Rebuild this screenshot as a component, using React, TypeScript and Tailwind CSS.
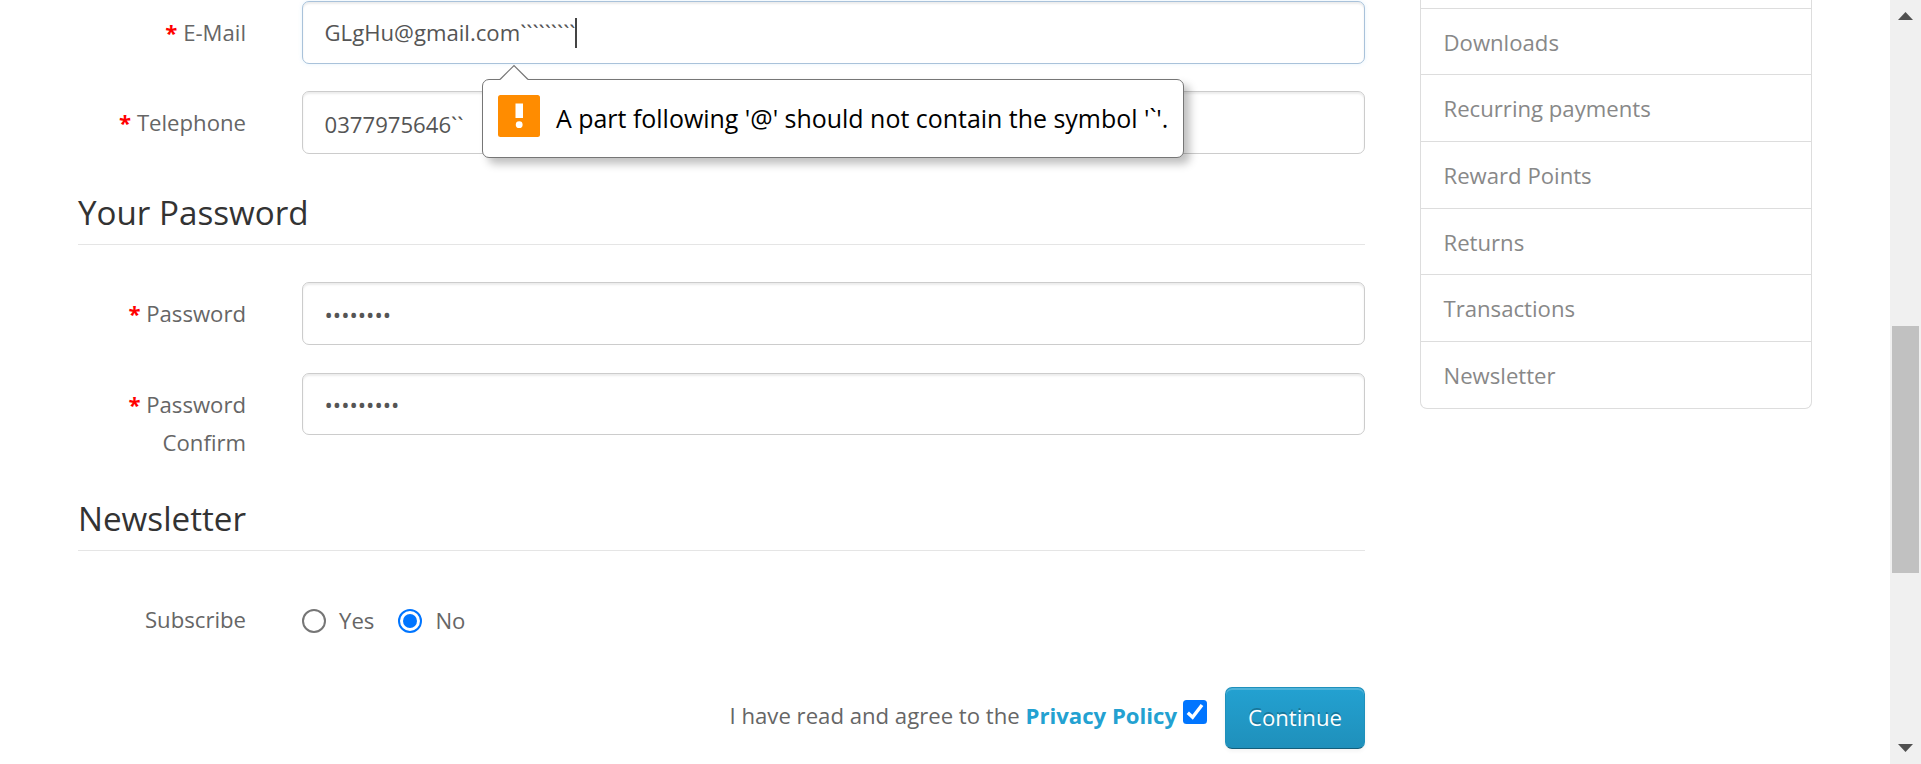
import type { ReactNode } from "react";

const links = ["Downloads", "Recurring payments", "Reward Points", "Returns", "Transactions", "Newsletter"];

const fieldBox =
  "w-[1063px] rounded-[7px] border border-[#ccc] bg-white px-[21.5px] text-[22.15px] text-[#555] shadow-[inset_0_2px_2px_rgba(0,0,0,0.075)] outline-none";

function Label({ children, required = true }: { children: ReactNode; required?: boolean }) {
  return (
    <div className="mr-[56px] w-[168px] shrink-0 pt-[13px] text-right leading-[37.5px] text-[#666]">
      {required && <span className="font-bold text-[#f00]">* </span>}
      {children}
    </div>
  );
}

function Legend({ children }: { children: ReactNode }) {
  return (
    <h2 className="h-[62px] border-b border-[#e5e5e5] pt-[7px] text-[33.2px] leading-[45px] text-[#333]">{children}</h2>
  );
}

function Tooltip() {
  return (
    <div className="absolute top-[78px] left-[180px] flex h-[79px] w-[702px] items-center rounded-[7px] border border-[#767676] bg-white pl-[15px] shadow-[6px_6px_8px_rgba(0,0,0,0.25)]">
      <svg className="absolute -top-[16px] left-[16px]" width="30" height="18" viewBox="0 0 30 18">
        <path d="M1 15 L15 1 L29 15 V18 H1Z" fill="#fff" />
        <path d="M1 15.5 L15 1.5 L29 15.5" fill="none" stroke="#767676" strokeWidth="1.2" />
      </svg>
      <svg className="-mt-[5px] shrink-0" width="42" height="42" viewBox="0 0 42 42">
        <rect width="42" height="42" rx="2.5" fill="#ff8c00" />
        <rect x="17.5" y="8.5" width="7.5" height="14.5" fill="#fff" />
        <circle cx="21.2" cy="29.7" r="3.4" fill="#fff" />
      </svg>
      <p className="ml-[16px] whitespace-nowrap text-[24.95px] text-black">
        A part following '@' should not contain the symbol '`'.
      </p>
    </div>
  );
}

export default function App() {
  return (
    <div className="flex h-[764px] w-[1921px] overflow-hidden bg-white font-['Open_Sans','Noto_Sans',sans-serif] text-[22.15px] text-[#666]">
      <main className="ml-[78px] w-[1287px] shrink-0">
        <div className="flex h-[90px] pt-px">
          <Label>E-Mail</Label>
          <div className="relative">
            <div className="flex h-[63px] w-[1063px] items-center rounded-[7px] border border-[#a9c2da] bg-white px-[21.5px] text-[#555] shadow-[inset_0_2px_2px_rgba(0,0,0,0.075),0_0_4px_rgba(82,168,236,0.15)]">
              <span>GLgHu@gmail.com</span>
              <span>`````````</span>
              <span className="h-[30px] w-[2px] bg-[#444]" />
            </div>
            <Tooltip />
          </div>
        </div>
        <div className="flex h-[93px] pt-px">
          <Label>Telephone</Label>
          <input className={`${fieldBox} h-[63px] pt-[2px]`} defaultValue="0377975646``" />
        </div>
        <Legend>Your Password</Legend>
        <div className="flex h-[127px] pt-[37px]">
          <Label>Password</Label>
          <input type="password" className={`${fieldBox} h-[63px] pt-px`} defaultValue="password" />
        </div>
        <div className="flex h-[117px] pt-px">
          <Label>Password Confirm</Label>
          <input type="password" className={`${fieldBox} h-[62px]`} defaultValue="password1" />
        </div>
        <Legend>Newsletter</Legend>
        <div className="flex h-[136px] pt-[37px]">
          <Label required={false}>Subscribe</Label>
          <div className="flex h-[64px] items-center pt-px">
            <span className="size-[24px] rounded-full border-2 border-[#767676]" />
            <span className="ml-[13px]">Yes</span>
            <span className="ml-[24px] flex size-[24px] items-center justify-center rounded-full border-2 border-[#0075ff]">
              <span className="size-[14px] rounded-full bg-[#0075ff]" />
            </span>
            <span className="ml-[13px]">No</span>
          </div>
        </div>
        <div className="flex items-start justify-end">
          <p className="pt-[10px] leading-[37.5px]">
            I have read and agree to the <b className="font-bold text-[#23a1d1]">Privacy Policy</b>
          </p>
          <svg className="mt-[13px] mr-[18px] ml-[6px]" width="24" height="24" viewBox="0 0 24 24">
            <rect width="24" height="24" rx="3.5" fill="#0075ff" />
            <path d="M4.8 12.8 L9.6 17.3 L19 5" fill="none" stroke="#fff" strokeWidth="3.4" />
          </svg>
          <button className="h-[62px] w-[140px] rounded-[7px] border border-[#1f90bb] border-b-[#145e7a] bg-linear-to-b from-[#23a1d1] to-[#1f90bb] text-white shadow-[inset_0_2px_0_rgba(255,255,255,0.2),0_2px_4px_rgba(0,0,0,0.05)] [text-shadow:0_-2px_0_rgba(0,0,0,0.25)]">
            Continue
          </button>
        </div>
      </main>
      <aside className="ml-[55px] h-[409px] w-[392px] shrink-0 rounded-b-[7px] border border-t-0 border-[#ddd] pt-[7.6px]">
        {links.map((l) => (
          <div key={l} className="flex h-[66.67px] items-center border-t border-[#ddd] pt-[2px] pl-[22.5px] text-[#888]">
            {l}
          </div>
        ))}
      </aside>
      <div className="ml-auto flex w-[31px] shrink-0 flex-col items-center bg-[#f0f0f0]">
        <svg className="mt-[12px]" width="15" height="8" viewBox="0 0 15 8">
          <path d="M0 8 L7.5 0 L15 8Z" fill="#505050" />
        </svg>
        <div className="mt-[306px] h-[247px] w-[27px] bg-[#c1c1c1]" />
        <svg className="mt-auto mb-[12px]" width="15" height="8" viewBox="0 0 15 8">
          <path d="M0 0 L7.5 8 L15 0Z" fill="#505050" />
        </svg>
      </div>
    </div>
  );
}
